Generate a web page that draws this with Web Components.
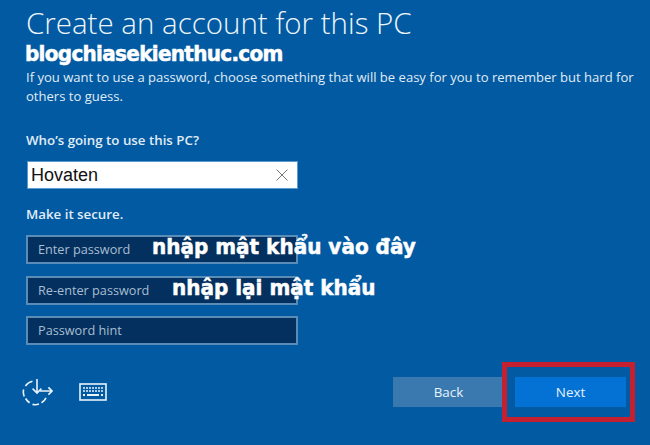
<!DOCTYPE html>
<html><head><meta charset="utf-8"><style>
html,body{margin:0;padding:0;background:#015aa2}
</style></head><body>
<setup-page>
<page-title>Create an account for this PC</page-title>
<intro-text>If you want to use a password, choose something that will be easy for you to remember but hard for others to guess.</intro-text>
<field-label style="margin-top:25px">Who’s going to use this PC?</field-label>
<name-input style="margin-top:12px">Hovaten</name-input>
<field-label style="margin-top:16px">Make it secure.</field-label>
<pass-input style="margin-top:12px">Enter password</pass-input>
<pass-input style="margin-top:11.5px">Re-enter password</pass-input>
<pass-input style="margin-top:11.5px">Password hint</pass-input>
<setup-footer></setup-footer>
<water-mark style="left:25px;top:42px;letter-spacing:-.7px">blogchiasekienthuc.com</water-mark>
<water-mark style="left:152px;top:235px">nhập mật khẩu vào đây</water-mark>
<water-mark style="left:172px;top:276px">nhập lại mật khẩu</water-mark>
<red-box style="left:502px;top:362px;width:133px;height:60px"></red-box>
</setup-page>
<script>
function def(name,css,html){
  customElements.define(name,class extends HTMLElement{
    constructor(){super();const s=this.attachShadow({mode:'open'});s.innerHTML='<style>'+css+'</style>'+html;}
  });
}
const UI='"Open Sans","Noto Sans",sans-serif';
def('setup-page',`:host{display:flex;flex-direction:column;align-items:flex-start;position:relative;width:650px;height:445px;box-sizing:border-box;padding:5px 0 0 26px;background:#015aa2;overflow:hidden;font-family:${UI};color:#fff}`,'<slot></slot>');
def('page-title',`:host{display:block;font-size:29.5px;font-weight:300;line-height:36px;color:#eef5fa;white-space:nowrap}`,'<slot></slot>');
def('intro-text',`:host{display:block;margin-top:27px;width:615px;font-size:13.05px;line-height:19px;color:#e0ecf5}`,'<slot></slot>');
def('field-label',`:host{display:block;font-size:13.3px;font-weight:600;line-height:18px;color:#e0ecf5}`,'<slot></slot>');
def('name-input',`:host{display:flex;align-items:center;justify-content:space-between;box-sizing:border-box;width:271px;height:28px;margin-left:1px;padding:0 9px 0 3px;background:#fff;border:1px solid #5b9bd0;color:#111;font-family:"Liberation Sans",Arial,sans-serif;font-size:18px}
svg{display:block}`,'<slot></slot><svg width="12" height="12" viewBox="0 0 12 12"><path d="M.5 .5 11.5 11.5M11.5 .5 .5 11.5" stroke="#777" stroke-width="1" fill="none"/></svg>');
def('pass-input',`:host{display:flex;align-items:center;box-sizing:border-box;width:272px;height:29px;padding:0 10px 1px;background:#03305e;border:2px solid #5a8cb8;color:#a9bed2;font-size:12.7px}`,'<slot></slot>');
def('setup-footer',`:host{display:flex;align-items:center;align-self:stretch;margin-top:32px;height:30px}
.icons{display:flex;align-items:center;gap:26px;margin-left:-4px}
.btns{display:flex;gap:11px;margin-left:auto;margin-right:24px}
svg{display:block}`,`<div class="icons">
<svg width="31" height="28" viewBox="0 0 31 28" fill="none" stroke="#e8f3fb" stroke-width="1.6"><path d="M10.5 3.3A12 12 0 0 0 3.4 8M1.6 11.5a12 12 0 0 0 .6 7M3.6 20.5a12 12 0 0 0 4 4.2M10.5 26.4a12 12 0 0 0 6.5-.3M19.5 24.8a12 12 0 0 0 4.5-5"/><path d="M15 1V15M10.6 10.6 15 15 19.4 10.6"/><path d="M18 13H30M26.4 9.4 30 13 26.4 16.6"/></svg>
<svg width="28" height="18" viewBox="0 0 28 18" fill="none"><rect x="1" y="1" width="26" height="16" fill="none" stroke="#e8f3fb" stroke-width="1.6"/><path d="M4 5H24M4 8H24" stroke="#e8f3fb" stroke-width="1.5" stroke-dasharray="2 1"/><path d="M4 12H6M8 12H20M22 12H24" stroke="#e8f3fb" stroke-width="2"/></svg>
</div><div class="btns"><flat-button style="background:#3a79b0">Back</flat-button><flat-button style="background:#0471d4">Next</flat-button></div>`);
def('flat-button',`:host{display:flex;align-items:center;justify-content:center;width:111px;height:30px;font-size:13.4px;color:#e6f3fc}`,'<slot></slot>');
def('water-mark',`:host{position:absolute;font-family:"DejaVu Sans",sans-serif;font-size:20px;font-weight:700;line-height:24px;color:#fff;white-space:nowrap;-webkit-text-stroke:.5px #fff;transform:scaleY(1.1);transform-origin:50% 60%}`,'<slot></slot>');
def('red-box',`:host{position:absolute;box-sizing:border-box;border:5px solid #c5202f}`,'');
</script>
</body></html>
